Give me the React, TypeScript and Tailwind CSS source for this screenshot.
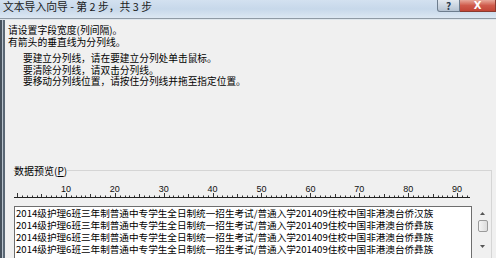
import React from "react";

const cjk = { fontFamily: '"Noto Sans CJK SC", "Noto Sans", sans-serif' };

const rows = [
  "2014级护理6班三年制普通中专学生全日制统一招生考试/普通入学201409住校中国非港澳台侨汉族",
  "2014级护理6班三年制普通中专学生全日制统一招生考试/普通入学201409住校中国非港澳台侨彝族",
  "2014级护理6班三年制普通中专学生全日制统一招生考试/普通入学201409住校中国非港澳台侨彝族",
  "2014级护理6班三年制普通中专学生全日制统一招生考试/普通入学201409住校中国非港澳台侨彝族",
];

const COL = 4.89;
const X0 = 5; // column 0 inside the ruler svg

function Ruler() {
  const ticks = Array.from({ length: 93 }, (_, i) => i);
  return (
    <svg width="462" height="17" className="block">
      <line x1="2" y1="14.5" x2="458" y2="14.5" stroke="#222" strokeWidth="1" />
      {ticks.map((c) => {
        const x = Math.round(X0 + c * COL) + 0.5;
        const h = c % 10 === 0 ? 4 : c % 5 === 0 ? 3 : 1.5;
        return <line key={c} x1={x} y1={14} x2={x} y2={14 - h} stroke="#333" strokeWidth="1" />;
      })}
      {[10, 20, 30, 40, 50, 60, 70, 80, 90].map((n) => (
        <text
          key={n}
          x={X0 + n * COL}
          y="9"
          textAnchor="middle"
          fontSize="9"
          fill="#111"
          fontFamily='"Liberation Sans", sans-serif'
        >
          {n}
        </text>
      ))}
    </svg>
  );
}

function TitleBar() {
  return (
    <div className="flex h-[18px] shrink-0 justify-between bg-gradient-to-b from-[#d3e1f0] via-[#c7d8ea] to-[#dce7f2]">
      <span className="pl-[3px] text-[10.8px] leading-[13px] text-[#1b1b1b]">文本导入向导 - 第 2 步，共 3 步</span>
      <div className="flex h-[12px]">
        <div className="flex w-[23px] items-center justify-center rounded-bl-[3px] border border-t-0 border-[#6d7d8e] bg-gradient-to-b from-[#e3e9f0] to-[#b5c3d2] text-[10px] font-bold leading-none text-[#2a3a4c]">
          ?
        </div>
        <div className="flex w-[36px] items-center justify-center border-b border-r border-[#8a3a30] bg-gradient-to-b from-[#e6a89b] via-[#cf5a4b] to-[#c24536] text-[10px] font-bold leading-none text-white" style={{ fontFamily: '"DejaVu Sans", sans-serif' }}>
          X
        </div>
      </div>
    </div>
  );
}

function ScrollBar() {
  return (
    <div className="ml-[3px] flex w-[15px] flex-col items-center">
      <svg width="7" height="5" className="mt-[5px]">
        <path d="M3.5 1 L6 4 L1 4 Z" fill="#555" />
      </svg>
      <div className="mt-[4px] h-[12px] w-[10px] rounded-[2px] border border-[#9a9a9a] bg-gradient-to-r from-[#f4f4f4] to-[#dcdcdc]" />
      <svg width="7" height="5" className="mt-[12px]">
        <path d="M1 1 L6 1 L3.5 4 Z" fill="#555" />
      </svg>
    </div>
  );
}

export default function App() {
  return (
    <div className="flex h-[258px] w-[496px] flex-col overflow-hidden bg-[#f0f0f0] text-black" style={cjk}>
      <TitleBar />
      <div className="h-[2px] shrink-0 border-t border-[#8f9aa5] bg-[#dfe6ec]" />
      <div className="flex min-h-0 flex-1">
        <div className="flex w-[5px] shrink-0">
          <div className="w-[2px] bg-[#46515c]" />
          <div className="w-[1px] bg-[#b8c2cc]" />
          <div className="w-[2px] bg-[#5a6774]" />
        </div>
        <div className="flex min-w-0 flex-1 flex-col">
          <div className="ml-[3px] mt-[5px] text-[9.8px] leading-[11.5px]">
            <p>请设置字段宽度(列间隔)。</p>
            <p>有箭头的垂直线为分列线。</p>
          </div>
          <div className="ml-[18px] mt-[5px] text-[9.7px] leading-[11.5px]">
            <p>要建立分列线，请在要建立分列处单击鼠标。</p>
            <p>要清除分列线，请双击分列线。</p>
            <p>要移动分列线位置，请按住分列线并拖至指定位置。</p>
          </div>
          <fieldset className="ml-[8px] mr-[4px] mt-[77px] min-w-0 flex-1 border-r border-t border-[#d5d5d5] pl-[1px]">
            <legend className="text-[10px] leading-[11px]">
              数据预览(<span className="underline">P</span>)
            </legend>
            <div className="ml-[-2px] mt-[7px]">
              <Ruler />
            </div>
            <div className="mt-[6px] flex">
              <div className="h-[60px] w-[458px] overflow-hidden border border-[#6e6e6e] bg-white pl-[1px] text-[9.6px] leading-[12px] whitespace-nowrap">
                {rows.map((r, i) => (
                  <div key={i}>{r}</div>
                ))}
              </div>
              <ScrollBar />
            </div>
          </fieldset>
        </div>
      </div>
    </div>
  );
}
